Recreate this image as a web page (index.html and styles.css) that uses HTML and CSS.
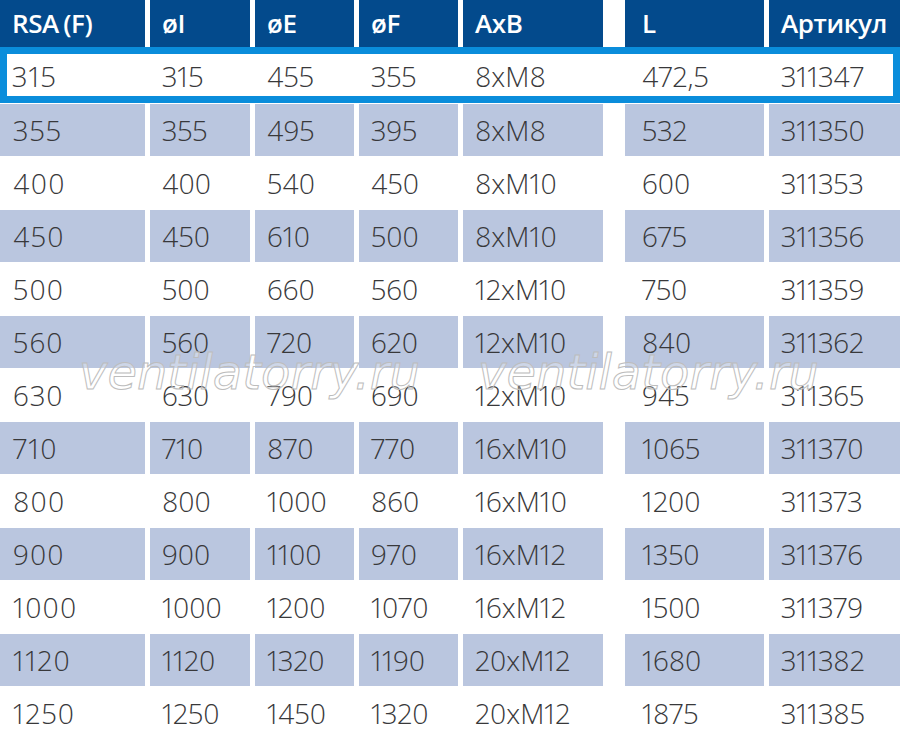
FILE: index.html
```html
<!DOCTYPE html>
<html lang="ru">
<head>
<meta charset="utf-8">
<title>RSA (F)</title>
<link rel="stylesheet" href="styles.css">
</head>
<body>
<div class="page">
  <div class="row head">
    <div class="cell">RSA (F)</div>
    <div class="cell">øI</div>
    <div class="cell">øE</div>
    <div class="cell">øF</div>
    <div class="cell">AxB</div>
    <div class="cell c6">L</div>
    <div class="cell">Артикул</div>
  </div>
  <div class="row sel">
    <div class="cell first">315</div>
    <div class="cell">315</div>
    <div class="cell">455</div>
    <div class="cell">355</div>
    <div class="cell">8xM8</div>
    <div class="cell c6">472,5</div>
    <div class="cell">311347</div>
  </div>
  <div class="body">
    <div class="row alt"><div class="cell">355</div><div class="cell">355</div><div class="cell">495</div><div class="cell">395</div><div class="cell">8xM8</div><div class="cell c6">532</div><div class="cell">311350</div></div>
    <div class="row"><div class="cell">400</div><div class="cell">400</div><div class="cell">540</div><div class="cell">450</div><div class="cell">8xM10</div><div class="cell c6">600</div><div class="cell">311353</div></div>
    <div class="row alt"><div class="cell">450</div><div class="cell">450</div><div class="cell">610</div><div class="cell">500</div><div class="cell">8xM10</div><div class="cell c6">675</div><div class="cell">311356</div></div>
    <div class="row"><div class="cell">500</div><div class="cell">500</div><div class="cell">660</div><div class="cell">560</div><div class="cell">12xM10</div><div class="cell c6">750</div><div class="cell">311359</div></div>
    <div class="row alt"><div class="cell">560</div><div class="cell">560</div><div class="cell">720</div><div class="cell">620</div><div class="cell">12xM10</div><div class="cell c6">840</div><div class="cell">311362</div></div>
    <div class="row"><div class="cell">630</div><div class="cell">630</div><div class="cell">790</div><div class="cell">690</div><div class="cell">12xM10</div><div class="cell c6">945</div><div class="cell">311365</div></div>
    <div class="row alt"><div class="cell">710</div><div class="cell">710</div><div class="cell">870</div><div class="cell">770</div><div class="cell">16xM10</div><div class="cell c6">1065</div><div class="cell">311370</div></div>
    <div class="row"><div class="cell">800</div><div class="cell">800</div><div class="cell">1000</div><div class="cell">860</div><div class="cell">16xM10</div><div class="cell c6">1200</div><div class="cell">311373</div></div>
    <div class="row alt"><div class="cell">900</div><div class="cell">900</div><div class="cell">1100</div><div class="cell">970</div><div class="cell">16xM12</div><div class="cell c6">1350</div><div class="cell">311376</div></div>
    <div class="row"><div class="cell">1000</div><div class="cell">1000</div><div class="cell">1200</div><div class="cell">1070</div><div class="cell">16xM12</div><div class="cell c6">1500</div><div class="cell">311379</div></div>
    <div class="row alt"><div class="cell">1120</div><div class="cell">1120</div><div class="cell">1320</div><div class="cell">1190</div><div class="cell">20xM12</div><div class="cell c6">1680</div><div class="cell">311382</div></div>
    <div class="row"><div class="cell">1250</div><div class="cell">1250</div><div class="cell">1450</div><div class="cell">1320</div><div class="cell">20xM12</div><div class="cell c6">1875</div><div class="cell">311385</div></div>
  </div>
  <div class="watermark">
    <span>ventilatorry.ru</span>
    <span>ventilatorry.ru</span>
  </div>
</div>
</body>
</html>
```

FILE: styles.css
```css
html, body {
  margin: 0;
  padding: 0;
  background: #ffffff;
}

.page {
  position: relative;
  width: 900px;
  height: 743px;
  overflow: hidden;
  font-family: "Open Sans", "Noto Sans", sans-serif;
  color: #38383a;
  font-variant-numeric: proportional-nums;
}

.row {
  display: grid;
  grid-template-columns: 145px 100px 99px 99px 140px 156px 131px;
  column-gap: 5px;
  height: 52px;
}

.cell {
  display: flex;
  align-items: center;
  padding-left: 12px;
  font-size: 28px;
  font-weight: 300;
  white-space: nowrap;
}

.body .cell:first-child {
  padding-left: 13px;
  letter-spacing: 1.2px;
}

.sel .first {
  padding-left: 5px;
  letter-spacing: 1.2px;
}

.c6 {
  margin-left: 17px;
  padding-left: 17px;
}

.head {
  height: 47px;
}

.head .cell {
  background: #034a8c;
  color: #ffffff;
  font-size: 26px;
  font-weight: 600;
  letter-spacing: -0.4px;
  word-spacing: -2px;
  padding-bottom: 2px;
}

.sel {
  height: 56px;
  box-sizing: border-box;
  border: 7px solid #0a8ddb;
  background: #ffffff;
  grid-template-columns: 138px 100px 99px 99px 140px 156px 124px;
}

.sel .cell {
  padding-top: 2px;
}

.body {
  display: flex;
  flex-direction: column;
  row-gap: 1px;
  margin-top: 1px;
}

.alt .cell {
  background: #bac6df;
}

.watermark {
  position: absolute;
  top: 348px;
  left: 79px;
  display: flex;
  gap: 58px;
  font-family: "DejaVu Sans", sans-serif;
  font-style: oblique;
  font-size: 48px;
  line-height: 1;
  color: rgba(255, 255, 255, 0.3);
  -webkit-text-stroke: 1px #bdbdbd;
  pointer-events: none;
  white-space: nowrap;
}
```
